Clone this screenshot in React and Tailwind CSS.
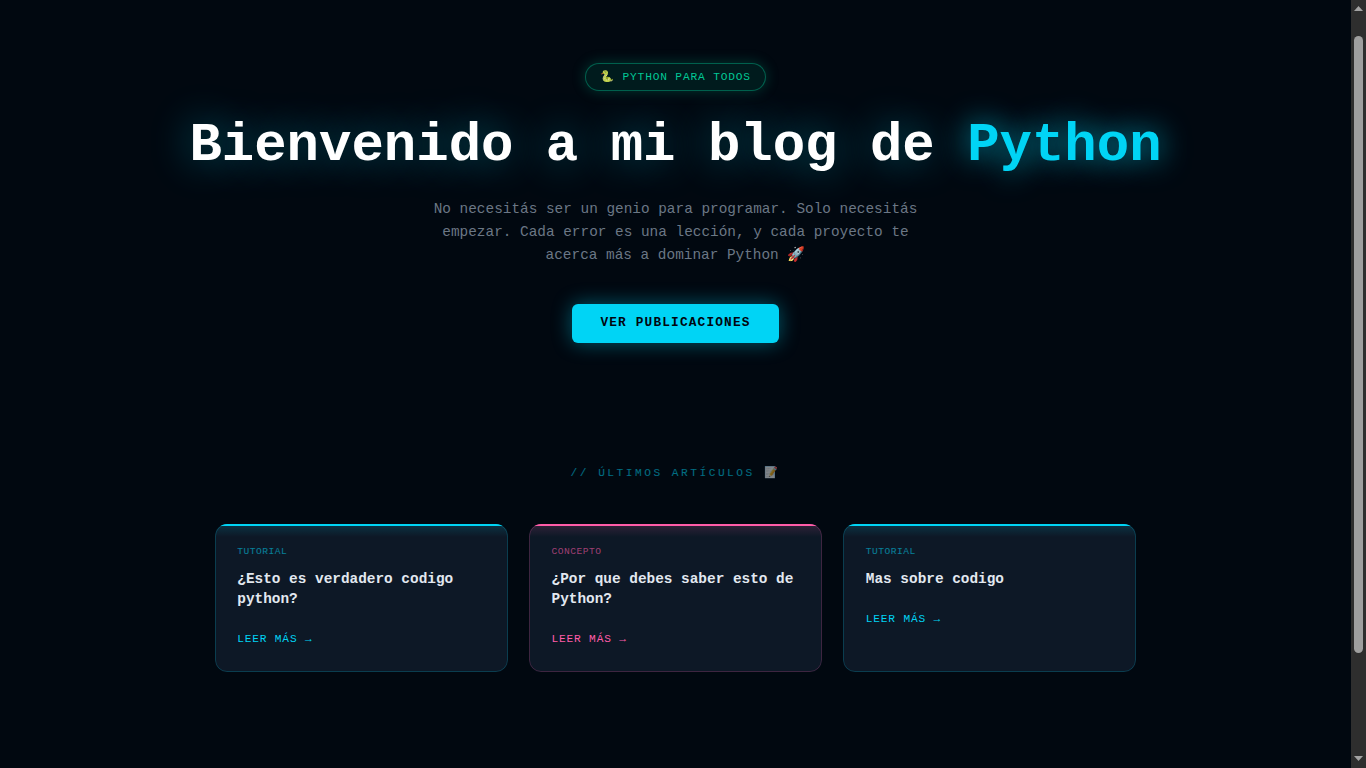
const cards = [
  { tag: "TUTORIAL", title: "¿Esto es verdadero codigo python?", pink: false },
  { tag: "CONCEPTO", title: "¿Por que debes saber esto de Python?", pink: true },
  { tag: "TUTORIAL", title: "Mas sobre codigo", pink: false },
];

function Card({ tag, title, pink }) {
  return (
    <article className="relative h-[148px] overflow-hidden rounded-xl bg-[#0d1826] px-[22.7px] pt-[22px]">
      <div className={`absolute inset-0 rounded-xl border ${pink ? "border-[#ff5ca8]/20" : "border-[#00d4f5]/20"}`} />
      <div className={`absolute inset-x-0 top-0 h-[13px] bg-gradient-to-b to-transparent ${pink ? "from-[#ff5ca8]/15" : "from-[#00d4f5]/15"}`} />
      <div className={`absolute inset-x-0 top-0 h-[2px] ${pink ? "bg-[#ff5ca8]" : "bg-[#00d4f5]"}`} />
      <div className={`text-[9.6px] leading-[12px] tracking-[0.5px] ${pink ? "text-[#ff5ca8]/60" : "text-[#00d4f5]/55"}`}>{tag}</div>
      <h3 className="mt-[11px] text-[14.4px] leading-[20px] font-bold text-[#e2e8f0]">{title}</h3>
      <div className={`mt-[23px] text-[11.2px] leading-[14px] tracking-[0.8px] ${pink ? "text-[#ff5ca8]" : "text-[#00d4f5]"}`}>LEER MÁS →</div>
    </article>
  );
}

function Scrollbar() {
  return (
    <div className="flex w-[15px] shrink-0 flex-col items-center bg-[#2e2e2e]">
      <svg className="mt-[6px] shrink-0" width="9" height="5" viewBox="0 0 9 5"><path d="M4.5 0 9 5H0z" fill="#a3a3a3" /></svg>
      <div className="mt-[25px] h-[617px] w-[9px] shrink-0 rounded-full bg-[#9f9f9f]" />
      <svg className="mt-[103px] shrink-0" width="9" height="5" viewBox="0 0 9 5"><path d="M0 0h9L4.5 5z" fill="#a3a3a3" /></svg>
    </div>
  );
}

export default function App() {
  return (
    <div className="flex h-screen overflow-hidden bg-[#010810] font-['Liberation_Mono',monospace]">
      <main className="min-w-0 flex-1">
        <section className="flex flex-col items-center pt-[63px] text-center">
          <div className="flex h-7 items-center rounded-full border border-[#00c896]/40 bg-[#00c896]/10 px-[13.8px] text-[11.2px] tracking-[0.84px] whitespace-pre text-[#00c896] shadow-[0_0_14px_rgba(0,200,150,0.25)]">
            🐍 PYTHON PARA TODOS
          </div>
          <h1 className="mt-[24px] text-[54px] leading-[62px] font-bold text-white [text-shadow:0_0_40px_rgba(0,212,245,0.45)]">
            Bienvenido a mi blog de <span className="text-[#00d4f5] [text-shadow:0_0_30px_rgba(0,212,245,0.8)]">Python</span>
          </h1>
          <p className="mt-[21px] w-[500px] text-[14.4px] leading-[23px] text-[#6b7785]">
            No necesitás ser un genio para programar. Solo necesitás empezar. Cada error es una lección, y cada proyecto te acerca más a dominar Python 🚀
          </p>
          <button className="mt-[37px] h-[39px] w-[207px] rounded-md bg-[#00d4f5] pb-[2px] text-[12.8px] font-bold tracking-[1.15px] text-[#01060f] shadow-[0_0_20px_rgba(0,212,245,0.4)]">
            VER PUBLICACIONES
          </button>
        </section>
        <section className="mx-auto mt-[122px] w-[921.8px]">
          <h2 className="text-center text-[11.2px] leading-[16px] tracking-[2.5px] text-[#00d4f5]/50">// ÚLTIMOS ARTÍCULOS 📝</h2>
          <div className="mt-[43px] grid grid-cols-3 gap-[21px]">
            {cards.map((c) => <Card key={c.title} {...c} />)}
          </div>
        </section>
      </main>
      <Scrollbar />
    </div>
  );
}
